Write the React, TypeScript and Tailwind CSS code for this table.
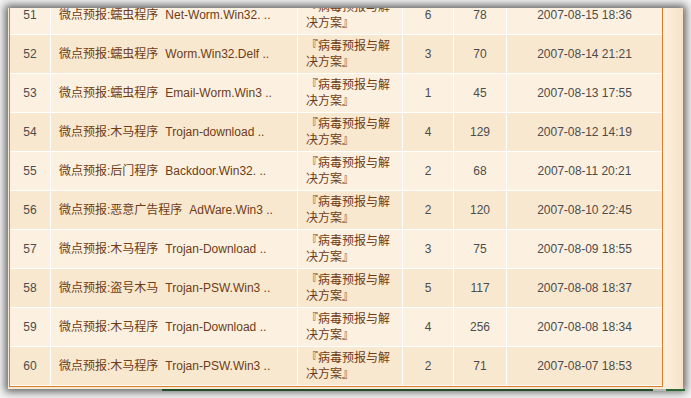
import React from "react";

interface Row {
  no: number;
  kind: string;
  name: string;
  replies: number;
  views: number;
  date: string;
}

const rows: Row[] = [
  { no: 51, kind: "蠕虫程序", name: "Net-Worm.Win32. ..", replies: 6, views: 78, date: "2007-08-15 18:36" },
  { no: 52, kind: "蠕虫程序", name: "Worm.Win32.Delf ..", replies: 3, views: 70, date: "2007-08-14 21:21" },
  { no: 53, kind: "蠕虫程序", name: "Email-Worm.Win3 ..", replies: 1, views: 45, date: "2007-08-13 17:55" },
  { no: 54, kind: "木马程序", name: "Trojan-download ..", replies: 4, views: 129, date: "2007-08-12 14:19" },
  { no: 55, kind: "后门程序", name: "Backdoor.Win32. ..", replies: 2, views: 68, date: "2007-08-11 20:21" },
  { no: 56, kind: "恶意广告程序", name: "AdWare.Win3 ..", replies: 2, views: 120, date: "2007-08-10 22:45" },
  { no: 57, kind: "木马程序", name: "Trojan-Download ..", replies: 3, views: 75, date: "2007-08-09 18:55" },
  { no: 58, kind: "盗号木马", name: "Trojan-PSW.Win3 ..", replies: 5, views: 117, date: "2007-08-08 18:37" },
  { no: 59, kind: "木马程序", name: "Trojan-Download ..", replies: 4, views: 256, date: "2007-08-08 18:34" },
  { no: 60, kind: "木马程序", name: "Trojan-PSW.Win3 ..", replies: 2, views: 71, date: "2007-08-07 18:53" },
];

const font = {
  fontFamily: '"Liberation Sans", "Noto Sans CJK SC", sans-serif',
};

const App: React.FC = () => {
  return (
    <div
      className="w-[691px] h-[398px] bg-[#f4f4f4] overflow-hidden pt-[8px] pl-[8px] flex flex-col text-[12px]"
      style={font}
    >
      {/* Window */}
      <div className="w-[675px] h-[381px] shrink-0 overflow-hidden flex bg-[#f9e9d3] shadow-[0_0_8px_3px_rgba(0,0,0,0.6)]">
        <div className="w-px shrink-0" />

        {/* Table */}
        <div className="w-[654px] shrink-0 mt-[-13px] self-start border border-[#d27c2c] bg-white">
          <div className="flex flex-col gap-px">
            {rows.map((r, i) => (
              <div
                key={r.no}
                className="grid grid-cols-[40px_246px_104px_50px_52px_155px] gap-x-px h-[38px]"
              >
                {[0, 1, 2, 3, 4, 5].map((c) => {
                  const bg = i % 2 === 0 ? "bg-[#fcf1e1]" : "bg-[#f9e8d0]";
                  if (c === 0)
                    return (
                      <div key={c} className={`${bg} flex items-center justify-center text-[#4c4c4c]`}>
                        {r.no}
                      </div>
                    );
                  if (c === 1)
                    return (
                      <div key={c} className={`${bg} flex items-center pl-2 text-[#6e3c16] whitespace-nowrap`}>
                        <span>微点预报:{r.kind}</span>
                        <span className="ml-[7px]">{r.name}</span>
                      </div>
                    );
                  if (c === 2)
                    return (
                      <div key={c} className={`${bg} flex flex-col justify-center pl-2 text-[#6e3c16] leading-4`}>
                        <span>『病毒预报与解</span>
                        <span>决方案』</span>
                      </div>
                    );
                  const val = c === 3 ? r.replies : c === 4 ? r.views : r.date;
                  return (
                    <div key={c} className={`${bg} flex items-center justify-center text-[#4c4c4c]`}>
                      {val}
                    </div>
                  );
                })}
              </div>
            ))}
            <div className="h-0" />
          </div>
        </div>

        {/* Page margin on the right */}
        <div className="flex-1 bg-gradient-to-r from-[#fcf0df] to-[#f6e3c9]" />
      </div>

      {/* Strip of what lies behind the window */}
      <div className="flex h-[2px] ml-[154px] shrink-0">
        <div className="w-[491px] bg-[#1f4d2a]" />
        <div className="w-[13px] bg-[#b8b8b0]" />
        <div className="w-[19px] bg-[#2a6a34]" />
      </div>
    </div>
  );
};

export default App;
